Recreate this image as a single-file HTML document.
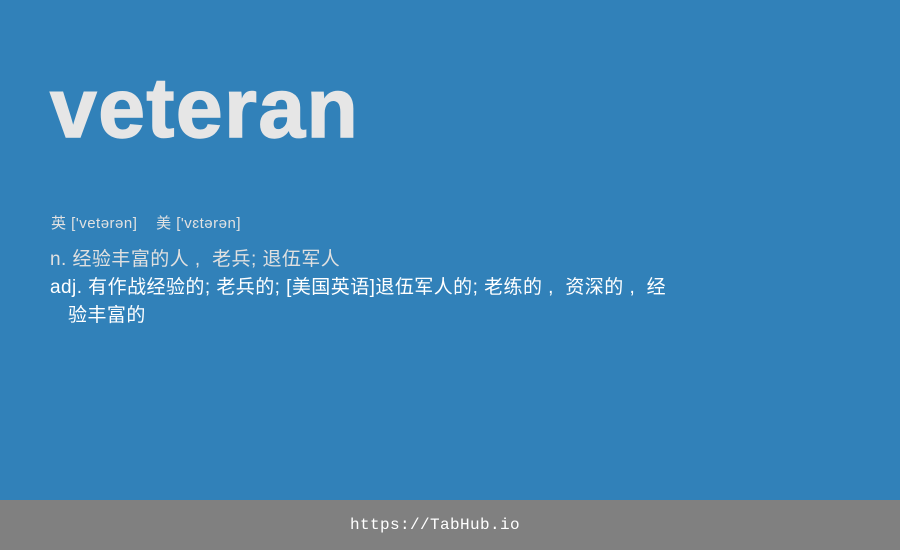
<!DOCTYPE html>
<html><head><meta charset="utf-8"><style>
body{margin:0;width:900px;height:550px;background:#3181b9;position:relative;overflow:hidden;font-family:"Liberation Sans","Noto Sans CJK SC",sans-serif}
.t{position:absolute;left:50px;top:58px;font-size:84px;font-weight:bold;color:#e6e6e6;line-height:100px;-webkit-text-stroke:1.5px #e6e6e6;letter-spacing:1.5px}
.p{position:absolute;left:51px;top:212px;font-size:15px;color:#e2e2e2;letter-spacing:0.5px}
.d{position:absolute;left:50px;top:246px;font-size:19px;line-height:28px;color:#fff;width:700px;letter-spacing:0.45px}
.n{color:#e0e0e0}
.i{padding-left:18px}
.fb{position:absolute;left:0;top:500px;width:900px;height:50px;background:#808080}
.f{position:absolute;left:-15px;top:500px;width:900px;height:50px;color:#fff;font-family:"Liberation Mono",monospace;font-size:16px;letter-spacing:0.4px;text-align:center;line-height:50px}
</style></head><body>
<div class="t">veteran</div>
<div class="p">英 ['vetərən] &nbsp;&nbsp; 美 ['vɛtərən]</div>
<div class="d"><div class="n">n. 经验丰富的人&nbsp;,&nbsp;&nbsp;老兵; 退伍军人</div>
<div>adj. 有作战经验的; 老兵的; [美国英语]退伍军人的; 老练的&nbsp;,&nbsp;&nbsp;资深的&nbsp;,&nbsp;&nbsp;经</div><div class="i">验丰富的</div></div>
<div class="fb"></div>
<div class="f">https://TabHub.io</div>
</body></html>
